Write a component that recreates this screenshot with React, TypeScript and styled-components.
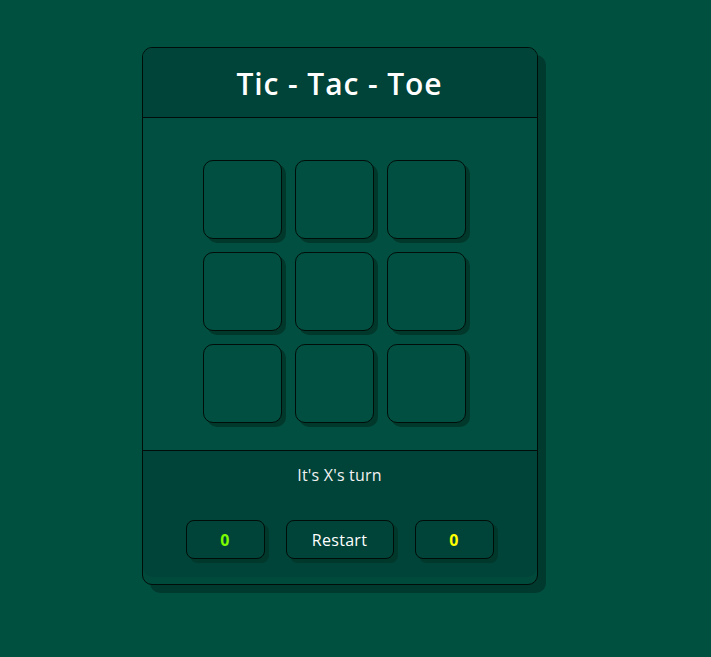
import React from "react";
import styled, { createGlobalStyle } from "styled-components";

const Global = createGlobalStyle`
  html, body { margin: 0; padding: 0; }
  body {
    background: #005040;
    font-family: "Open Sans", "Lato", sans-serif;
    min-height: 657px;
  }
`;

const Page = styled.div`
  display: flex;
  justify-content: center;
  padding-top: 47px;
  padding-right: 32px;
`;

const Card = styled.div`
  width: 394px;
  border: 1px solid #000d08;
  border-radius: 10px;
  background: #004a3c;
  box-shadow: 8px 8px 0 #003a2f;
  padding-bottom: 7px;
  overflow: hidden;
  display: flex;
  flex-direction: column;
`;

const Header = styled.header`
  height: 69px;
  background: #004338;
  border-bottom: 1px solid #000d08;
  display: flex;
  align-items: center;
  justify-content: center;
`;

const Title = styled.h1`
  margin: 0;
  color: #ffffff;
  font-size: 30px;
  font-weight: 600;
  letter-spacing: 0.9px;
  padding-top: 2px;
`;

const BoardArea = styled.section`
  height: 333px;
  background: #004f40;
  border-bottom: 1px solid #000d08;
  display: flex;
  justify-content: center;
  padding-top: 42px;
  padding-right: 11px;
  box-sizing: border-box;
`;

const Grid = styled.div`
  display: grid;
  grid-template-columns: repeat(3, 79px);
  grid-auto-rows: 79px;
  gap: 13px;
`;

const Cell = styled.button`
  all: unset;
  box-sizing: border-box;
  width: 79px;
  height: 79px;
  border: 1px solid #000d08;
  border-radius: 10px;
  background: #004f40;
  box-shadow: 4px 4px 0 #00382c;
`;

const Footer = styled.footer`
  height: 126px;
  background: #004338;
  border-radius: 0 0 10px 10px;
  display: flex;
  flex-direction: column;
  align-items: center;
  box-sizing: border-box;
  padding-top: 13px;
`;

const Status = styled.p`
  margin: 0;
  color: #f2f2f2;
  font-size: 16px;
  line-height: 22px;
  letter-spacing: 0.2px;
`;

const Controls = styled.div`
  display: flex;
  gap: 21px;
  margin-top: 34px;
`;

const Btn = styled.button<{ $w: number; $color?: string }>`
  all: unset;
  box-sizing: border-box;
  width: ${(p) => p.$w}px;
  height: 39px;
  border: 1px solid #000d08;
  border-radius: 8px;
  background: #004338;
  box-shadow: 4px 4px 0 #00382c;
  display: flex;
  align-items: center;
  justify-content: center;
  color: ${(p) => p.$color ?? "#ffffff"};
  font-size: 16px;
  font-weight: ${(p) => (p.$color ? 700 : 500)};
  letter-spacing: 0.3px;
`;

export default function App() {
  return (
    <>
      <Global />
      <Page>
        <Card>
          <Header>
            <Title>Tic - Tac - Toe</Title>
          </Header>
          <BoardArea>
            <Grid>
              {Array.from({ length: 9 }).map((_, i) => (
                <Cell key={i} aria-label={`cell ${i + 1}`} />
              ))}
            </Grid>
          </BoardArea>
          <Footer>
            <Status>It's X's turn</Status>
            <Controls>
              <Btn $w={79} $color="#7cfc00">0</Btn>
              <Btn $w={108}>Restart</Btn>
              <Btn $w={79} $color="#ffff00">0</Btn>
            </Controls>
          </Footer>
        </Card>
      </Page>
    </>
  );
}
